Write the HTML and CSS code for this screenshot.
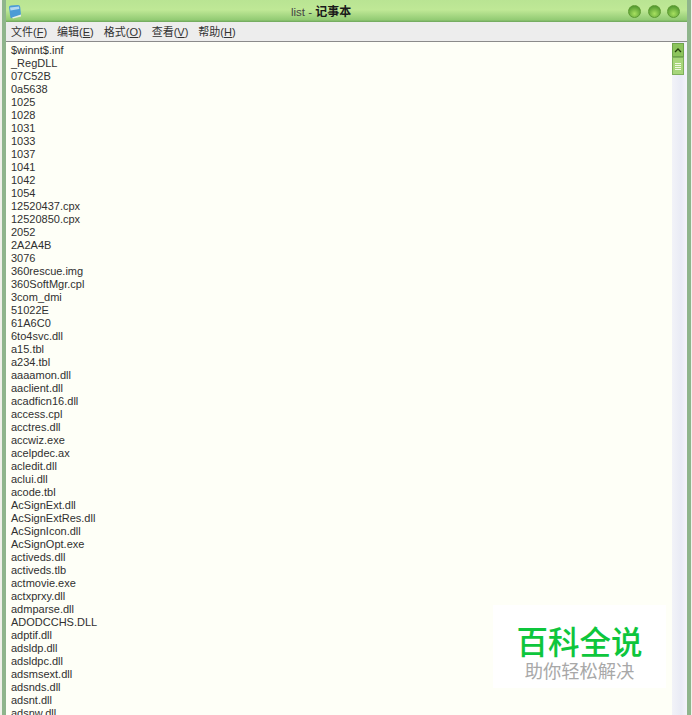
FILE: index.html
```html
<!DOCTYPE html>
<html lang="zh">
<head>
<meta charset="utf-8">
<title>list - 记事本</title>
<link rel="stylesheet" href="styles.css">
</head>
<body>
<div class="window">
  <header class="titlebar">
    <svg class="app-icon" width="14" height="15" viewBox="0 0 14 15"><path d="M1 3 Q1 1.500 3 1.500 L10 1 Q12 1 12.200 3 L13 11 4 14 Q2.500 14.500 2.300 13Z" fill="#4b9bd6"/><path d="M2 3.500 11 2.500 11.300 5 2.500 6.500Z" fill="#b4d9f0"/><path d="M4 13.500 13 10.500 13 12.500 5 14.500Z" fill="#e6efe6"/></svg>
    <div class="title">list - <b>记事本</b></div>
    <div class="controls">
      <span class="ctl"></span><span class="ctl"></span><span class="ctl"></span>
    </div>
  </header>
  <nav class="menubar">
    <span>文件(<u>F</u>)</span><span>编辑(<u>E</u>)</span><span>格式(<u>O</u>)</span><span>查看(<u>V</u>)</span><span>帮助(<u>H</u>)</span>
  </nav>
  <div class="client">
    <pre class="text">$winnt$.inf
_RegDLL
07C52B
0a5638
1025
1028
1031
1033
1037
1041
1042
1054
12520437.cpx
12520850.cpx
2052
2A2A4B
3076
360rescue.img
360SoftMgr.cpl
3com_dmi
51022E
61A6C0
6to4svc.dll
a15.tbl
a234.tbl
aaaamon.dll
aaclient.dll
acadficn16.dll
access.cpl
acctres.dll
accwiz.exe
acelpdec.ax
acledit.dll
aclui.dll
acode.tbl
AcSignExt.dll
AcSignExtRes.dll
AcSignIcon.dll
AcSignOpt.exe
activeds.dll
activeds.tlb
actmovie.exe
actxprxy.dll
admparse.dll
ADODCCHS.DLL
adptif.dll
adsldp.dll
adsldpc.dll
adsmsext.dll
adsnds.dll
adsnt.dll
adsnw.dll</pre>
    <div class="scrollbar">
      <div class="sb-btn"><svg width="8" height="5" viewBox="0 0 8 5"><path d="M1 4 4 1 7 4" fill="none" stroke="#24400c" stroke-width="1.300"/></svg></div>
      <div class="sb-thumb"><i></i><i></i><i></i><i></i></div>
    </div>
    <aside class="watermark">
      <div class="wm-main">百科全说</div>
      <div class="wm-sub">助你轻松解决</div>
    </aside>
  </div>
</div>
</body>
</html>
```
FILE: styles.css
```css
html, body { margin: 0; padding: 0; height: 715px; overflow: hidden; background: #f0f1ea; }
.window {
  margin-left: 2px; width: 689px; height: 715px; box-sizing: border-box;
  display: flex; flex-direction: column; overflow: hidden;
  border-left: 4px solid #8fb58c; border-right: 4px solid #8fb58c;
  background: #ececec;
}
.titlebar {
  height: 22px; flex: none; display: flex; align-items: center; position: relative;
  background: linear-gradient(#b9e493, #bfe896 45%, #93cb74 90%, #6ea55c);
  margin: 0 -4px; padding: 0 0 0 6px;
  border-radius: 4px 4px 0 0;
}
.app-icon { flex: none; }
.title {
  position: absolute; left: 289px; top: 5px; font: 11.500px/14px "Liberation Sans", "Noto Sans CJK SC", sans-serif; color: #444;
}
.title b { color: #1a1a1a; font-weight: 700; font-size: 12px; }
.controls { margin-left: auto; display: flex; gap: 6.500px; margin-right: 11px; }
.ctl {
  width: 13px; height: 13px; border-radius: 50%; border: 1px solid #5d9a32;
  background: radial-gradient(circle at 50% 70%, #a8e060, #68ab3c 60%, #3f8526);
  box-sizing: border-box;
}
.menubar {
  height: 19px; flex: none; display: flex; gap: 10px; align-items: center; padding-left: 5px;
  background: #ededed; border-bottom: 1px solid #8b8b8b;
  font: 11px/14px "Liberation Sans", "Noto Sans CJK SC", sans-serif; color: #333;
}
.menubar u { text-decoration: underline; }
.client { flex: 1; display: flex; background: #fefff7; position: relative; min-height: 0; }
.text {
  flex: 1; margin: 0; padding: 2px 0 0 5px; overflow: hidden;
  font: 11px/13px "Liberation Sans", "Open Sans", sans-serif; color: #303030;
}
.scrollbar { width: 15px; flex: none; background: linear-gradient(90deg, #f2f3f8, #e9ebf5 60%, #f4f4fa); padding-top: 1px; box-sizing: border-box; }
.sb-btn {
  width: 12px; height: 14px; background: #8cc45c; border: 1px solid #6ea34a; box-sizing: border-box;
  display: flex; align-items: center; justify-content: center;
}
.sb-thumb {
  width: 12px; height: 18px; background: #a7d67a; border: 1px solid #7db05a; box-sizing: border-box;
  display: flex; flex-direction: column; gap: 1px; align-items: center; justify-content: center;
}
.sb-thumb i { display: block; width: 6px; height: 1px; background: #f0f7e4; }
.watermark {
  position: absolute; left: 487px; top: 563px; width: 173px; height: 83px; background: #fff;
  display: flex; flex-direction: column; align-items: center; padding-top: 20px; box-sizing: border-box;
}
.wm-main { font: 500 31.500px/30px "Noto Sans CJK SC", sans-serif; color: #0ec63c; }
.wm-sub { font: 18.300px/20px "Noto Sans CJK SC", sans-serif; color: #a8a8a8; margin-top: 5px; }
```
